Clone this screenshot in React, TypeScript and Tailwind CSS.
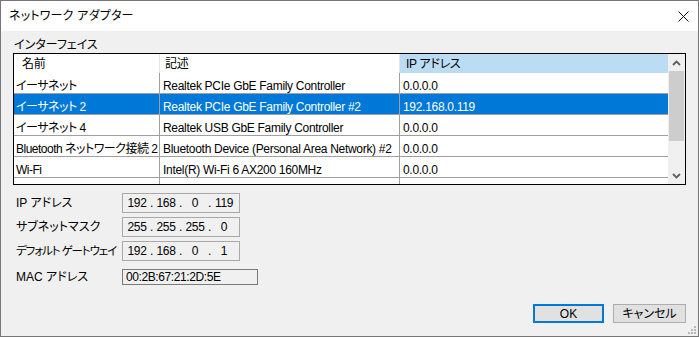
import React from "react";

const font =
  "font-['Liberation_Sans','Noto_Sans_CJK_JP',sans-serif] [font-feature-settings:'palt']";

const rows = [
  { name: "イーサネット", desc: "Realtek PCIe GbE Family Controller", ip: "0.0.0.0" },
  { name: "イーサネット 2", desc: "Realtek PCIe GbE Family Controller #2", ip: "192.168.0.119", sel: true },
  { name: "イーサネット 4", desc: "Realtek USB GbE Family Controller", ip: "0.0.0.0" },
  { name: "Bluetooth ネットワーク接続 2", desc: "Bluetooth Device (Personal Area Network) #2", ip: "0.0.0.0" },
  { name: "Wi-Fi", desc: "Intel(R) Wi-Fi 6 AX200 160MHz", ip: "0.0.0.0" },
  { name: "ローカル エリア接続* 1", desc: "Microsoft Wi-Fi Direct Virtual Adapter", ip: "0.0.0.0" },
];

function IpBox({ parts }: { parts: string[] }) {
  return (
    <div className="w-[118px] h-[20px] border border-[#a9a9a9] flex items-center pl-[1px] tracking-[-0.4px]">
      {parts.map((p, i) => (
        <React.Fragment key={i}>
          <span className="w-[26px] text-center">{p}</span>
          {i < 3 && <span className="w-[3px] text-center">.</span>}
        </React.Fragment>
      ))}
    </div>
  );
}

function Chevron({ up }: { up?: boolean }) {
  return (
    <svg width="9" height="6" viewBox="0 0 9 6">
      <path
        d={up ? "M1 5 L4.5 1.5 L8 5" : "M1 1 L4.5 4.5 L8 1"}
        fill="none"
        stroke="#606060"
        strokeWidth="1.8"
      />
    </svg>
  );
}

export default function App() {
  return (
    <div className={`w-[699px] h-[337px] border border-[#767676] flex flex-col text-[12px] text-black ${font}`}>
      {/* title bar */}
      <div className="h-[30px] bg-white flex items-center justify-between">
        <span className="pl-[8px] text-[12px] tracking-[0.2px]">ネットワーク アダプター</span>
        <svg width="11" height="11" viewBox="0 0 11 11" className="mr-[9px]">
          <path d="M0.5 0.5 L10.5 10.5 M10.5 0.5 L0.5 10.5" stroke="#111" strokeWidth="1" />
        </svg>
      </div>

      {/* body */}
      <div className="flex-1 bg-[#f0f0f0] flex flex-col relative pb-[13px]">
        <div className="pl-[13px] pt-[6px] h-[22px] leading-[16px]">インターフェイス</div>

        {/* list */}
        <div className="ml-[12px] w-[673px] h-[132px] border border-black bg-white flex overflow-hidden">
          <div className="w-[654px] flex flex-col tracking-[-0.3px]">
            {/* header */}
            <div className="h-[19px] flex shrink-0">
              <div className="w-[146px] pl-[8px] pt-[1px] flex items-center border-r border-[#e5e5e5]">名前</div>
              <div className="w-[240px] pl-[5px] pt-[1px] flex items-center border-r border-[#e5e5e5]">記述</div>
              <div className="w-[268px] pl-[6px] pt-[1px] flex items-center bg-[#bcdcf4]">IP アドレス</div>
            </div>
            {rows.map((r, i) => (
              <div
                key={i}
                className={`h-[21px] flex shrink-0 border-b border-[#a0a0a0] whitespace-nowrap ${
                  r.sel ? "bg-[#0078d7] text-white" : ""
                }`}
              >
                <div className="w-[146px] pl-[2px] pt-[6px] flex items-center border-r border-[#a0a0a0] overflow-hidden tracking-[-0.5px]">
                  {r.name}
                </div>
                <div className="w-[240px] pl-[3px] pt-[6px] flex items-center border-r border-[#a0a0a0] overflow-hidden">
                  {r.desc}
                </div>
                <div className="w-[268px] pl-[3px] pt-[6px] flex items-center">{r.ip}</div>
              </div>
            ))}
          </div>
          {/* scrollbar */}
          <div className="w-[17px] bg-[#f0f0f0] flex flex-col">
            <div className="h-[17px] flex items-center justify-center shrink-0">
              <Chevron up />
            </div>
            <div className="mx-[1px] h-[70px] bg-[#cdcdcd] shrink-0" />
            <div className="flex-1" />
            <div className="h-[17px] flex items-center justify-center shrink-0">
              <Chevron />
            </div>
          </div>
        </div>

        {/* fields */}
        <div className="mt-[8px] pl-[15px] flex flex-col">
          <div className="h-[24px] flex">
            <div className="w-[106px] leading-[20px]">IP アドレス</div>
            <IpBox parts={["192", "168", "0", "119"]} />
          </div>
          <div className="h-[24px] flex">
            <div className="w-[106px] leading-[20px]">サブネットマスク</div>
            <IpBox parts={["255", "255", "255", "0"]} />
          </div>
          <div className="h-[24px] flex">
            <div className="w-[106px] leading-[20px] whitespace-nowrap text-[11.5px] tracking-[-1.1px]">デフォルト ゲートウェイ</div>
            <IpBox parts={["192", "168", "0", "1"]} />
          </div>
          <div className="h-[24px] flex items-center">
            <div className="w-[106px]">MAC アドレス</div>
            <div className="w-[136px] h-[16px] border border-[#7a7a7a] flex items-center pl-[3px] tracking-[-0.4px]">
              00:2B:67:21:2D:5E
            </div>
          </div>
        </div>

        {/* buttons */}
        <div className="mt-auto flex justify-end pr-[12px] gap-[9px]">
          <button className="w-[71px] h-[19px] bg-[#e1e1e1] border-2 border-[#0078d7] flex items-center justify-center">
            OK
          </button>
          <button className="w-[73px] h-[19px] bg-[#e1e1e1] border border-[#adadad] flex items-center justify-center">
            キャンセル
          </button>
        </div>

        {/* resize grip */}
        <svg width="9" height="9" viewBox="0 0 9 9" className="absolute right-[1px] bottom-[1px]">
          {[
            [6, 0],
            [6, 3],
            [3, 3],
            [6, 6],
            [3, 6],
            [0, 6],
          ].map(([x, y], i) => (
            <rect key={i} x={x} y={y} width="2" height="2" fill="#b8b8b8" />
          ))}
        </svg>
      </div>
    </div>
  );
}
